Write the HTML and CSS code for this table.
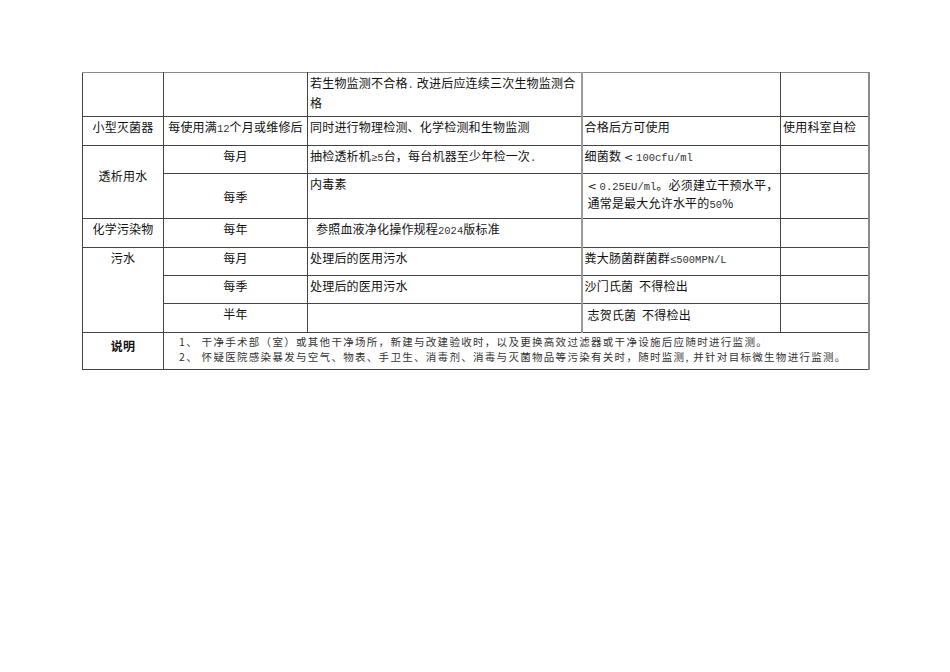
FILE: index.html
```html
<!DOCTYPE html>
<html lang="zh">
<head>
<meta charset="utf-8">
<title>监测表</title>
<link rel="stylesheet" href="styles.css">
</head>
<body>
<table class="grid">
  <colgroup>
    <col class="c1"><col class="c2"><col class="c3"><col class="c4"><col class="c5">
  </colgroup>
  <tr class="r1">
    <td></td>
    <td></td>
    <td class="txt">若生物监测不合格<span class="m">.</span> 改进后应连续三次生物监测合<br>格</td>
    <td class="c4b"></td>
    <td></td>
  </tr>
  <tr class="r2">
    <td class="ctr">小型灭菌器</td>
    <td class="ctr">每使用满<span class="m">12</span>个月或维修后</td>
    <td class="txt">同时进行物理检测、化学检测和生物监测</td>
    <td class="txt c4b">合格后方可使用</td>
    <td class="txt">使用科室自检</td>
  </tr>
  <tr class="r3 dark-b">
    <td class="ctr mid lift" rowspan="2">透析用水</td>
    <td class="ctr">每月</td>
    <td class="txt">抽检透析机<span class="m">≥5</span>台，每台机器至少年检一次<span class="m">.</span></td>
    <td class="txt c4b">细菌数 <span class="lt">&lt;</span> <span class="m">100cfu/ml</span></td>
    <td></td>
  </tr>
  <tr class="r4">
    <td class="ctr mid">每季</td>
    <td class="txt">内毒素</td>
    <td class="txt c4b ind"><span class="lt">&lt;</span> <span class="m">0.25EU/ml</span>。必须建立干预水平，<br>通常是最大允许水平的<span class="m">50</span>%</td>
    <td></td>
  </tr>
  <tr class="r5">
    <td class="ctr">化学污染物</td>
    <td class="ctr">每年</td>
    <td class="txt ind2">参照血液净化操作规程<span class="m">2024</span>版标准</td>
    <td class="c4b"></td>
    <td></td>
  </tr>
  <tr class="r6">
    <td class="ctr" rowspan="3">污水</td>
    <td class="ctr">每月</td>
    <td class="txt">处理后的医用污水</td>
    <td class="txt c4b">粪大肠菌群菌群<span class="m">≤500MPN/L</span></td>
    <td></td>
  </tr>
  <tr class="r7">
    <td class="ctr">每季</td>
    <td class="txt">处理后的医用污水</td>
    <td class="txt c4b">沙门氏菌&nbsp;&nbsp;不得检出</td>
    <td></td>
  </tr>
  <tr class="r8">
    <td class="ctr">半年</td>
    <td></td>
    <td class="txt c4b ind">志贺氏菌&nbsp;&nbsp;不得检出</td>
    <td></td>
  </tr>
  <tr class="r9">
    <td class="ctr note-h">说明</td>
    <td class="notes" colspan="4">
      <div class="note-line">1、 干净手术部（室）或其他干净场所，新建与改建验收时，以及更换高效过滤器或干净设施后应随时进行监测。</div>
      <div class="note-line">2、 怀疑医院感染暴发与空气、物表、手卫生、消毒剂、消毒与灭菌物品等污染有关时，随时监测, 并针对目标微生物进行监测。</div>
    </td>
  </tr>
</table>
</body>
</html>
```
FILE: styles.css
```css
html, body {
  margin: 0;
  padding: 0;
  background: #ffffff;
}

body {
  font-family: "Noto Sans CJK SC", "Noto Sans", sans-serif;
  font-size: 12px;
  color: #111;
}

.grid {
  margin: 72px 0 0 82px;
  border-collapse: collapse;
  table-layout: fixed;
  width: 787px;
  border-top: 1px solid #8a8a8a;
  border-left: 1px solid #444;
  border-right: 2px solid #8a8a8a;
  border-bottom: 1px solid #555;
}

.c1 { width: 81px; }
.c2 { width: 144px; }
.c3 { width: 274px; }
.c4 { width: 199px; }
.c5 { width: 88px; }

.grid td {
  border: 1px solid #444;
  padding: 1px 2px 0 2px;
  vertical-align: top;
  line-height: 17px;
  white-space: nowrap;
  overflow: hidden;
  letter-spacing: 0.2px;
}

.grid td.c4b {
  border-left: 2px solid #9a9a9a;
}

.grid tr.r1 td { border-top-color: #8a8a8a; }

.r1 { height: 44px; }
.r2 { height: 29px; }
.r3 { height: 28px; }
.r4 { height: 45px; }
.r5 { height: 29px; }
.r6 { height: 28px; }
.r7 { height: 28px; }
.r8 { height: 29px; }
.r9 { height: 37px; }

.grid tr.r4 td { border-top: 1px solid #000; }
.grid tr.r4 td.c4b { border-left: 2px solid #9a9a9a; }

.ctr { text-align: center; }
.mid { vertical-align: middle !important; }
.lift { padding-bottom: 14px !important; }

.txt { text-align: left; }
.ind { padding-left: 5px !important; line-height: 16px !important; padding-top: 3px !important; }
.ind2 { padding-left: 8px !important; }

.lt {
  font-family: "DejaVu Sans", sans-serif;
  font-size: 11px;
  letter-spacing: 0;
}

.m {
  font-family: "Liberation Mono", "DejaVu Sans Mono", monospace;
  font-size: 10.5px;
  letter-spacing: 0;
  color: #333;
}

.note-h {
  font-weight: bold;
  padding-top: 4px !important;
}

.notes {
  padding: 1px 0 0 15px !important;
  font-family: "Noto Sans CJK SC", sans-serif;
  font-size: 10.5px;
  letter-spacing: 1.3px !important;
  color: #333;
}

.note-line {
  line-height: 15px;
}
```
